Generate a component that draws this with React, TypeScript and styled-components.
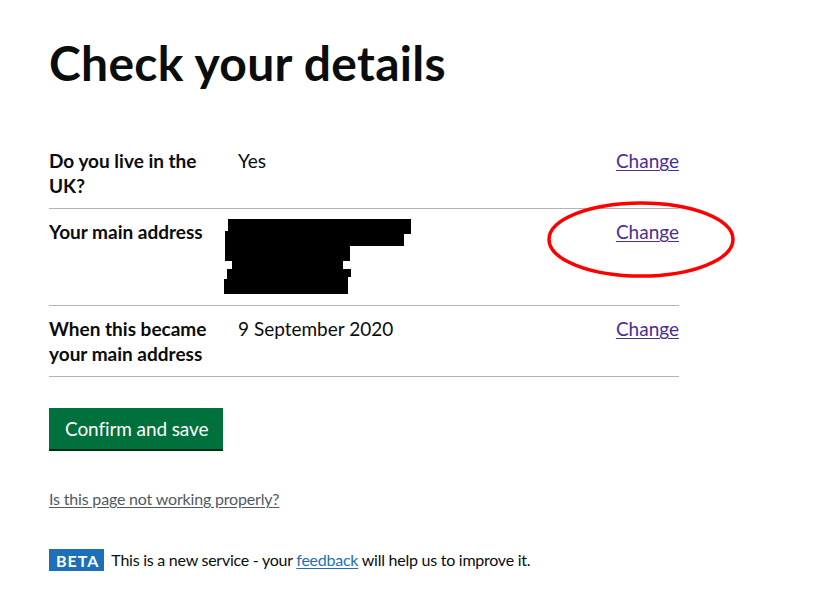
import React from "react";
import styled, { createGlobalStyle } from "styled-components";

const Global = createGlobalStyle`
  html, body { margin: 0; padding: 0; background: #ffffff; }
  body { font-family: Lato, Arial, sans-serif; color: #0b0c0c; }
`;

const Page = styled.main`
  position: relative;
  padding: 38px 0 0 49px;
  width: 630px;
`;

const Heading = styled.h1`
  margin: 0 0 50px;
  font-size: 48px;
  line-height: 50px;
  font-weight: 700;
  letter-spacing: 0.3px;
`;

const List = styled.dl`
  margin: 0 0 31px;
  padding: 0;
  width: 630px;
`;

const Row = styled.div`
  display: grid;
  grid-template-columns: 30% 50% 20%;
  border-bottom: 1px solid #b1b4b6;
  font-size: 19px;
  line-height: 25px;
`;

const Key = styled.dt`
  margin: 0;
  padding: 10px 20px 10px 0;
  font-weight: 700;
`;

const Value = styled.dd`
  margin: 0;
  padding: 10px 20px 10px 0;
`;

const Actions = styled.dd`
  margin: 0;
  padding: 10px 0;
  text-align: right;
`;

const ChangeLink = styled.a`
  color: #4c2c92;
  text-decoration: underline;
  text-underline-offset: 2px;
  text-decoration-thickness: 1px;
`;

const Redaction = styled.svg`
  display: block;
  margin-left: -14px;
`;

const Button = styled.button`
  display: inline-block;
  margin: 0 0 40px;
  padding: 9px 15px 8px 16px;
  border: 0;
  background: #00703c;
  box-shadow: 0 2px 0 #002d18;
  color: #ffffff;
  font-family: inherit;
  font-size: 19px;
  line-height: 24px;
  letter-spacing: -0.1px;
  cursor: pointer;
`;

const Block = styled.div`
  display: block;
`;

const ReportLink = styled.a`
  color: #505a5f;
  font-size: 16px;
  line-height: 20px;
  letter-spacing: -0.18px;
  text-decoration: underline;
  text-underline-offset: 2px;
`;

const Phase = styled.p`
  margin: 40px 0 0;
  display: flex;
  align-items: center;
  gap: 7px;
  font-size: 16px;
  line-height: 20px;
`;

const Tag = styled.strong`
  flex: none;
  display: inline-block;
  padding: 2px 5px 0 7px;
  height: 20px;
  background: #1d70b8;
  color: #ffffff;
  font-weight: 700;
  font-size: 16px;
  line-height: 20px;
  letter-spacing: 1px;
`;

const Message = styled.span`
  letter-spacing: -0.25px;
`;

const FeedbackLink = styled.a`
  color: #1d70b8;
  text-decoration: underline;
  text-underline-offset: 2px;
`;

const Annotation = styled.svg`
  position: absolute;
  left: 546px;
  top: 200px;
  pointer-events: none;
`;

const rows = [
  { key: "Do you live in the UK?", value: "Yes" },
  { key: "Your main address", value: null },
  { key: "When this became your main address", value: "9 September 2020" },
];

export default function App() {
  return (
    <>
      <Global />
      <Page>
        <Heading>Check your details</Heading>
        <List>
          {rows.map((r) => (
            <Row key={r.key}>
              <Key>{r.key}</Key>
              <Value>
                {r.value ?? (
                  <Redaction width="190" height="76" viewBox="0 0 190 76">
                    <polygon
                      fill="#000"
                      points="4,0 187,0 187,15 180,15 180,27 126,27 126,42 119,42 119,50 127,50 127,58 124,58 124,75 0,75 0,60 3,60 3,50 8,50 8,42 1,42 1,12 4,12"
                    />
                  </Redaction>
                )}
              </Value>
              <Actions>
                <ChangeLink href="#">Change</ChangeLink>
              </Actions>
            </Row>
          ))}
        </List>
        <Button>Confirm and save</Button>
        <Block>
          <ReportLink href="#">Is this page not working properly?</ReportLink>
        </Block>
        <Phase>
          <Tag>BETA</Tag>
          <Message>
            This is a new service - your <FeedbackLink href="#">feedback</FeedbackLink> will help us to improve it.
          </Message>
        </Phase>
        <Annotation width="192" height="80" viewBox="0 0 192 80">
          <ellipse cx="95" cy="39.5" rx="92" ry="36.5" fill="none" stroke="#ff0000" strokeWidth="3.5" />
        </Annotation>
      </Page>
    </>
  );
}
